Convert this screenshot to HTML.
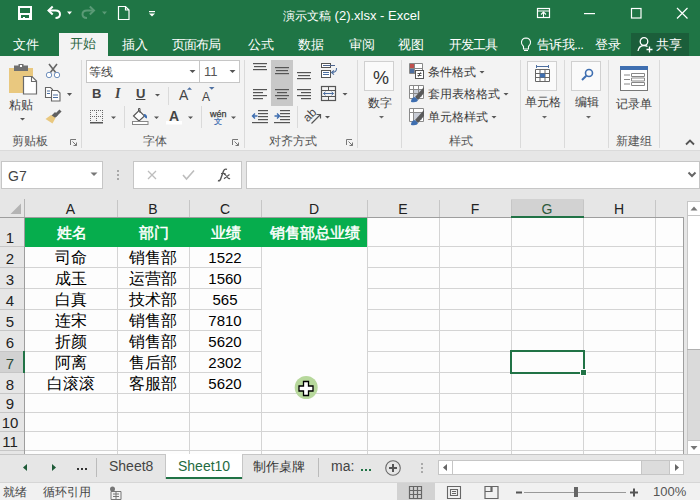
<!DOCTYPE html>
<html><head><meta charset="utf-8">
<style>
*{margin:0;padding:0;box-sizing:border-box}
html,body{width:700px;height:500px;overflow:hidden;background:#fff;font-family:"Liberation Sans",sans-serif}
.a{position:absolute}
#title{left:0;top:0;width:700px;height:56px;background:#1f7545}
.tt{color:#fff;font-size:12px;white-space:nowrap;line-height:16px}
.tab{color:#fff;font-size:13px;line-height:16px;white-space:nowrap}
#ribbon{left:0;top:56px;width:700px;height:95px;background:#f3f3f3;border-bottom:1px solid #dadada}
.sep{width:1px;background:#dadada}
.gl{font-size:12px;color:#555;line-height:14px;white-space:nowrap}
.rt{font-size:12px;color:#3c3c3c;line-height:14px;white-space:nowrap}
.dd{width:0;height:0;border-left:3px solid transparent;border-right:3px solid transparent;border-top:3px solid #555}
.hl{background:#d8d8d8}
.vl{background:#d4d4d4;width:1px}
.hlin{background:#d4d4d4;height:1px}
.ch{font-size:14px;color:#222;line-height:16px;text-align:center}
.rh{font-size:15px;color:#222;line-height:16px;text-align:center;width:24px}
.cell{font-size:16px;color:#000;line-height:16px;text-align:center;white-space:nowrap}
.hdr{font-size:15px;font-weight:normal;-webkit-text-stroke:0.5px #fff;color:#fff;line-height:16px;text-align:center;white-space:nowrap}
</style></head><body>
<div id="title" class="a"></div>
<div class="a tt" style="left:283px;top:8px">演示文稿<span style="font-size:13px"> (2).xlsx - Excel</span></div>
<!-- tabs -->
<div class="a" style="left:59px;top:33px;width:49px;height:24px;background:#f3f3f3"></div>
<div class="a tab" style="left:13px;top:37px">文件</div>
<div class="a tab" style="left:70px;top:36px;color:#2a6441">开始</div>
<div class="a tab" style="left:122px;top:37px">插入</div>
<div class="a tab" style="left:172px;top:37px;letter-spacing:-1px">页面布局</div>
<div class="a tab" style="left:248px;top:37px">公式</div>
<div class="a tab" style="left:298px;top:37px">数据</div>
<div class="a tab" style="left:349px;top:37px">审阅</div>
<div class="a tab" style="left:398px;top:37px">视图</div>
<div class="a tab" style="left:449px;top:37px;letter-spacing:-1px">开发工具</div>
<div class="a tab" style="left:537px;top:37px;letter-spacing:-0.6px">告诉我...</div>
<div class="a tab" style="left:595px;top:37px">登录</div>
<div class="a" style="left:631px;top:33px;width:58px;height:24px;background:#1b5e3a"></div>
<div class="a tab" style="left:656px;top:37px">共享</div>


<!-- QAT -->
<svg class="a" style="left:0;top:0" width="700" height="30">
 <rect x="18" y="6" width="14" height="14" fill="#fff"/>
 <rect x="20" y="8" width="10" height="5" fill="#1f7545"/>
 <rect x="21" y="15" width="8" height="3" fill="#1f7545"/>
 <rect x="23" y="17" width="2" height="1" fill="#fff"/>
 <!-- undo -->
 <path d="M48.5 10.5 H55.5 Q60 10.5 60 14.2 Q60 17.8 55.5 18" fill="none" stroke="#fff" stroke-width="2"/>
 <path d="M52.7 6.5 L48.5 10.5 L52.7 14.5" fill="none" stroke="#fff" stroke-width="2"/>
 <path d="M67 11.5h5l-2.5 3z" fill="#fff"/>
 <!-- redo faded -->
 <g transform="translate(142.5,0) scale(-1,1)">
 <path d="M48.5 10.5 H55.5 Q60 10.5 60 14.2 Q60 17.8 55.5 18" fill="none" stroke="#5a9a76" stroke-width="2"/>
 <path d="M52.7 6.5 L48.5 10.5 L52.7 14.5" fill="none" stroke="#5a9a76" stroke-width="2"/>
 </g>
 <path d="M102 11.5h5l-2.5 3z" fill="#5a9a76"/>
 <!-- new doc -->
 <path d="M118.5 6.5h7l3.5 3.5v9.5h-10.5z M125.5 6.5v3.5h3.5" fill="none" stroke="#fff" stroke-width="1.2"/>
 <!-- customize -->
 <rect x="149" y="11" width="6" height="1.2" fill="#fff"/>
 <path d="M149 13.5h6l-3 3z" fill="#fff"/>
 <!-- ribbon display options -->
 <rect x="537.5" y="8.5" width="12" height="9" fill="none" stroke="#fff" stroke-width="1.2"/>
 <rect x="537.5" y="10.5" width="12" height="1" fill="#fff"/>
 <path d="M543.5 17.5v-5 M541 14.5l2.5-2.5 2.5 2.5" fill="none" stroke="#fff" stroke-width="1.1"/>
 <!-- minimize -->
 <rect x="584" y="13" width="11" height="1.2" fill="#fff"/>
 <!-- maximize -->
 <rect x="631.5" y="8.5" width="9.5" height="9.5" fill="none" stroke="#fff" stroke-width="1.2"/>
 <!-- close -->
 <path d="M677 8 L687.5 18.5 M687.5 8 L677 18.5" stroke="#fff" stroke-width="1.2"/>
</svg>
<!-- bulb -->
<svg class="a" style="left:520px;top:37px" width="12" height="16"><path d="M3.5 9.5 Q1 7 1.5 5 Q2 1.2 6 1 Q10 1.2 10.5 5 Q11 7 8.5 9.5 V12 H3.5Z M4 13.5h4" fill="none" stroke="#fff" stroke-width="1.1"/></svg>
<!-- share person -->
<svg class="a" style="left:637px;top:36px" width="18" height="18"><circle cx="7" cy="5.5" r="3.8" fill="none" stroke="#fff" stroke-width="1.3"/><path d="M1 15 Q2 9.5 7 9.5 Q9 9.5 10.5 10.5" fill="none" stroke="#fff" stroke-width="1.3"/><path d="M12.5 10.5v6 M9.5 13.5h6" stroke="#fff" stroke-width="1.3"/></svg>
<div id="ribbon" class="a"></div>


<!-- ribbon separators -->
<div class="a sep" style="left:81px;top:60px;height:88px"></div>
<div class="a sep" style="left:244px;top:60px;height:88px"></div>
<div class="a sep" style="left:357px;top:60px;height:88px"></div>
<div class="a sep" style="left:401px;top:60px;height:88px"></div>
<div class="a sep" style="left:520px;top:60px;height:88px"></div>
<div class="a sep" style="left:564px;top:60px;height:88px"></div>
<div class="a sep" style="left:608px;top:60px;height:88px"></div>
<div class="a sep" style="left:659px;top:60px;height:88px"></div>
<div class="a sep" style="left:168px;top:87px;height:18px"></div>
<div class="a sep" style="left:124px;top:106px;height:22px"></div>
<div class="a sep" style="left:201px;top:106px;height:22px"></div>
<div class="a sep" style="left:297px;top:106px;height:22px"></div>
<!-- highlight -->
<div class="a" style="left:271px;top:60px;width:22px;height:46px;background:#c8c8c8"></div>
<!-- font boxes -->
<div class="a" style="left:86px;top:60px;width:114px;height:23px;background:#fff;border:1px solid #c6c6c6"></div>
<div class="a" style="left:199px;top:60px;width:41px;height:23px;background:#fff;border:1px solid #c6c6c6"></div>
<div class="a rt" style="left:89px;top:62px;line-height:20px">等线</div>
<div class="a rt" style="left:204px;top:62px;line-height:20px;font-size:13px;color:#555">11</div>
<!-- number / cells / editing button boxes -->
<div class="a" style="left:364px;top:61px;width:30px;height:30px;background:#fafafa;border:1px solid #d0d0d0"></div>
<div class="a" style="left:527px;top:61px;width:30px;height:30px;background:#fafafa;border:1px solid #d0d0d0"></div>
<div class="a" style="left:571px;top:61px;width:30px;height:30px;background:#fafafa;border:1px solid #d0d0d0"></div>
<div class="a" style="left:373px;top:68px;font-size:18px;line-height:20px;color:#333">%</div>
<!-- texts -->
<div class="a rt" style="left:9px;top:95px;line-height:20px">粘贴</div>
<div class="a rt" style="left:368px;top:93px;line-height:20px">数字</div>
<div class="a rt" style="left:525px;top:92px;line-height:20px">单元格</div>
<div class="a rt" style="left:575px;top:92px;line-height:20px">编辑</div>
<div class="a rt" style="left:616px;top:94px;line-height:20px">记录单</div>
<div class="a rt" style="left:428px;top:62px;line-height:20px">条件格式</div>
<div class="a rt" style="left:428px;top:84px;line-height:20px">套用表格格式</div>
<div class="a rt" style="left:428px;top:107px;line-height:20px">单元格样式</div>
<div class="a gl" style="left:12px;top:131px;line-height:20px">剪贴板</div>
<div class="a gl" style="left:143px;top:131px;line-height:20px">字体</div>
<div class="a gl" style="left:269px;top:131px;line-height:20px">对齐方式</div>
<div class="a gl" style="left:449px;top:131px;line-height:20px">样式</div>
<div class="a gl" style="left:616px;top:131px;line-height:20px">新建组</div>
<svg class="a" style="left:0;top:0" width="700" height="160">
 <!-- paste -->
 <rect x="9" y="68" width="24" height="25" fill="#e9c87f"/>
 <path d="M14 65.5h14v5.5h-14z" fill="#707070"/>
 <rect x="18.5" y="64" width="5" height="4" fill="#707070"/>
 <rect x="20" y="65" width="2" height="2" fill="#fff"/>
 <path d="M23.5 76.5h8.5l4.5 4.5v13h-13z" fill="#fff" stroke="#6a6a6a" stroke-width="1.2"/>
 <path d="M31.5 76.5v5h5" fill="none" stroke="#6a6a6a" stroke-width="1.1"/>
 <path d="M20 118h5l-2.5 2.5z" fill="#555"/>
 <!-- scissors -->
 <path d="M49 64 L56 73 M57 64 L50 73" stroke="#666" stroke-width="1.6"/>
 <circle cx="49" cy="75" r="2.7" fill="#fff" stroke="#7090bd" stroke-width="1"/>
 <circle cx="57" cy="75" r="2.7" fill="#fff" stroke="#7090bd" stroke-width="1"/>
 <!-- copy -->
 <path d="M45.5 87.5h5l2 2v8h-7z" fill="#fff" stroke="#666" stroke-width="1.1"/>
 <path d="M47 91h3 M47 93.5h3" stroke="#4d6fa0" stroke-width="1"/>
 <path d="M51.5 90.5h6l2.5 2.5v8h-8.5z" fill="#fff" stroke="#666" stroke-width="1.1"/>
 <path d="M53 95h5 M53 97.5h5" stroke="#4d6fa0" stroke-width="1"/>
 <path d="M67 93h5l-2.5 3z" fill="#555"/>
 <!-- format painter -->
 <path d="M60.5 110.5 L55 116" stroke="#606060" stroke-width="3"/>
 <path d="M56.5 113.5 L51 119" stroke="#606060" stroke-width="4"/>
 <path d="M51 115 L45.5 119 L52.5 123.5 L55.5 118z" fill="#e9c87f"/>
 <!-- launchers -->
 <g fill="none" stroke="#777" stroke-width="1">
  <path d="M70.5 145v-5.5h5.5 M72.5 141.5l4 4 M76.5 142.5v3h-3"/>
  <path d="M232.5 145v-5.5h5.5 M234.5 141.5l4 4 M238.5 142.5v3h-3"/>
  <path d="M346.5 145v-5.5h5.5 M348.5 141.5l4 4 M352.5 142.5v3h-3"/>
 </g>
 <!-- font dropdowns -->
 <path d="M189.5 70h6l-3 3z" fill="#555"/>
 <path d="M229.5 70h6l-3 3z" fill="#555"/>
 <!-- U dd -->
 <path d="M155 94h5l-2.5 2.5z" fill="#555"/>
 <path d="M111 116.5h5l-2.5 2.5z" fill="#555"/>
 <path d="M154 116.5h5l-2.5 2.5z" fill="#555"/>
 <path d="M188 116.5h5l-2.5 2.5z" fill="#555"/>
 <path d="M231 116.5h5l-2.5 2.5z" fill="#555"/>
 <!-- borders icon -->
 <g fill="#666"><rect x="100" y="110" width="1" height="1"/><rect x="100" y="116" width="1" height="1"/><rect x="102" y="110" width="1" height="1"/><rect x="102" y="112" width="1" height="1"/><rect x="102" y="114" width="1" height="1"/><rect x="102" y="116" width="1" height="1"/><rect x="102" y="118" width="1" height="1"/><rect x="102" y="120" width="1" height="1"/><rect x="102" y="122" width="1" height="1"/><rect x="90" y="110" width="1" height="1"/><rect x="90" y="112" width="1" height="1"/><rect x="90" y="114" width="1" height="1"/><rect x="90" y="116" width="1" height="1"/><rect x="90" y="118" width="1" height="1"/><rect x="90" y="120" width="1" height="1"/><rect x="90" y="122" width="1" height="1"/><rect x="92" y="110" width="1" height="1"/><rect x="92" y="116" width="1" height="1"/><rect x="94" y="110" width="1" height="1"/><rect x="94" y="116" width="1" height="1"/><rect x="96" y="110" width="1" height="1"/><rect x="96" y="112" width="1" height="1"/><rect x="96" y="114" width="1" height="1"/><rect x="96" y="116" width="1" height="1"/><rect x="96" y="118" width="1" height="1"/><rect x="96" y="120" width="1" height="1"/><rect x="96" y="122" width="1" height="1"/><rect x="98" y="110" width="1" height="1"/><rect x="98" y="116" width="1" height="1"/></g>
 <rect x="90" y="122" width="13" height="1.5" fill="#555"/>
 <!-- fill color -->
 <path d="M133.5 116 L139 110.5 L144.5 116 L139 121z" fill="#fff" stroke="#555" stroke-width="1.1"/>
 <path d="M138.5 111 V108.5 h1.5 V113" fill="none" stroke="#555" stroke-width="1"/>
 <path d="M144 114 Q147.5 114 147 118.5 Q145 118 144 116z" fill="#3e6eb0"/>
 <rect x="132.5" y="121.5" width="15.5" height="3" fill="#fff" stroke="#888" stroke-width="1"/>
 <!-- font color bar -->
 <rect x="166" y="121" width="16" height="3.5" fill="#fff"/>
 <!-- grow/shrink triangles -->
 <path d="M187 89.7h5l-2.5-2.5z" fill="#4d6fa0"/>
 <path d="M209 87h5.5l-2.75 2.7z" fill="#4d6fa0"/>
 <!-- alignment lines -->
 <g fill="#555">
  <rect x="253" y="63" width="14" height="1.2"/><rect x="254" y="66" width="12" height="1.2"/><rect x="253" y="69" width="14" height="1.2"/>
  <rect x="275" y="67" width="14" height="1.2"/><rect x="276" y="70" width="12" height="1.2"/><rect x="275" y="73" width="14" height="1.2"/>
  <rect x="297" y="72" width="14" height="1.2"/><rect x="298" y="75" width="12" height="1.2"/><rect x="297" y="78" width="14" height="1.2"/>
  <rect x="253" y="89" width="14" height="1.2"/><rect x="253" y="92" width="10" height="1.2"/><rect x="253" y="95" width="14" height="1.2"/><rect x="253" y="98" width="10" height="1.2"/>
  <rect x="275" y="89" width="14" height="1.2"/><rect x="277" y="92" width="10" height="1.2"/><rect x="275" y="95" width="14" height="1.2"/><rect x="277" y="98" width="10" height="1.2"/>
  <rect x="297" y="89" width="14" height="1.2"/><rect x="301" y="92" width="10" height="1.2"/><rect x="297" y="95" width="14" height="1.2"/><rect x="301" y="98" width="10" height="1.2"/>
 </g>
 <!-- wrap text -->
 <rect x="321.5" y="63.5" width="9" height="4" fill="#fff" stroke="#555" stroke-width="1"/>
 <rect x="323" y="65" width="12" height="1" fill="#4d6590"/>
 <rect x="321.5" y="70.5" width="9" height="7" fill="#fff" stroke="#555" stroke-width="1"/>
 <rect x="323" y="72" width="6" height="1" fill="#4d6fa0"/><rect x="323" y="74" width="6" height="1" fill="#4d6fa0"/>
 <path d="M336.5 68 Q337 72.5 331.5 72.5 M334 70.3 L331.5 72.5 L334 74.7" fill="none" stroke="#4d6fa0" stroke-width="1.1"/>
 <!-- merge -->
 <rect x="321.5" y="86.5" width="14" height="14" fill="none" stroke="#555" stroke-width="1.2"/>
 <path d="M321.5 90.5h14 M321.5 96.5h14 M328.5 86.5v4 M328.5 96.5v4" stroke="#555" stroke-width="1"/>
 <path d="M323.5 93.5h10 M325.5 91.8l-2 1.7 2 1.7 M331.5 91.8l2 1.7-2 1.7" fill="none" stroke="#4d6fa0" stroke-width="1"/>
 <path d="M342.5 93h5l-2.5 2.5z" fill="#555"/>
 <!-- indents -->
 <g fill="#555">
  <rect x="258" y="110" width="10" height="1.2"/><rect x="258" y="113" width="10" height="1.2"/><rect x="258" y="116" width="10" height="1.2"/><rect x="258" y="119" width="10" height="1.2"/><rect x="252" y="122" width="16" height="1.2"/>
  <rect x="280" y="110" width="10" height="1.2"/><rect x="280" y="113" width="10" height="1.2"/><rect x="280" y="116" width="10" height="1.2"/><rect x="280" y="119" width="10" height="1.2"/><rect x="274" y="122" width="16" height="1.2"/>
 </g>
 <path d="M252.5 116h5 M255 113.5l-2.5 2.5 2.5 2.5" fill="none" stroke="#3e6eb0" stroke-width="1.4"/>
 <path d="M274.5 116h5 M277 113.5l2.5 2.5-2.5 2.5" fill="none" stroke="#3e6eb0" stroke-width="1.4"/>
 <!-- orientation -->
 <path d="M311.5 123.5 L320.5 114.5 M316.5 114.5h4v4" fill="none" stroke="#555" stroke-width="1.2"/>
 <path d="M325 116h5l-2.5 2.5z" fill="#555"/>
 <!-- number dd -->
 <path d="M379 116h5l-2.5 2.5z" fill="#666"/>
 <path d="M542 116h5l-2.5 2.5z" fill="#666"/>
 <path d="M586 116h5l-2.5 2.5z" fill="#666"/>
 <!-- styles dd -->
 <path d="M479.5 71h5l-2.5 2.5z" fill="#555"/>
 <path d="M503.5 93h5l-2.5 2.5z" fill="#555"/>
 <path d="M491.5 116h5l-2.5 2.5z" fill="#555"/>
 <!-- cond format icon -->
 <path d="M409.5 63.5h13v10h-13z M409.5 68.5h13 M414.5 63.5v10" fill="#fff" stroke="#888" stroke-width="1"/>
 <rect x="410" y="64" width="4" height="4" fill="#c0504d"/>
 <rect x="410" y="69" width="4" height="4" fill="#4d6fa0"/>
 <rect x="415.5" y="70.5" width="8" height="8" fill="#fff" stroke="#555" stroke-width="1"/>
 <path d="M417.5 73.5h4 M417.5 75.5h4 M420.7 72.3 L418.3 76.7" stroke="#444" stroke-width="0.9"/>
 <!-- table format icon -->
 <rect x="410" y="86" width="13" height="12" fill="#fff"/>
 <rect x="414" y="90" width="8" height="7" fill="#c9cdd6"/>
 <path d="M409.5 85.5h14v13h-14z M409.5 89.5h14 M409.5 93.5h14 M413.5 85.5v13 M418.5 85.5v13" fill="none" stroke="#8a8a8a" stroke-width="1"/>
 <path d="M424 87 L424 93 L418 100 L415 97z" fill="#5a5a5a"/>
 <path d="M411 102 Q411 97.5 415 97 L418 100 Q417 103 411 102z" fill="#3e6eb0"/>
 <!-- cell style icon -->
 <rect x="410" y="109" width="13" height="12" fill="#fff"/>
 <rect x="414" y="113" width="8" height="7" fill="#c9cdd6"/>
 <path d="M409.5 108.5h14v13h-14z M409.5 112.5h14 M413.5 108.5v13" fill="none" stroke="#8a8a8a" stroke-width="1"/>
 <path d="M424 110 L424 116 L418 123 L415 120z" fill="#5a5a5a"/>
 <path d="M411 125 Q411 120.5 415 120 L418 123 Q417 126 411 125z" fill="#3e6eb0"/>
 <!-- cells icon -->
 <path d="M535.5 69.5h14v12h-14z M535.5 73.5h14 M535.5 77.5h14 M540 69.5v12 M545 69.5v12" fill="#fff" stroke="#666" stroke-width="1"/>
 <rect x="540" y="73.5" width="5" height="4" fill="#3e6eb0"/>
 <path d="M536 66.5h13 M536.5 65v3 M548.5 65v3" stroke="#4d6fa0" stroke-width="1"/>
 <!-- search icon -->
 <circle cx="589" cy="73" r="3.5" fill="none" stroke="#3e6eb0" stroke-width="1.6"/>
 <path d="M586.3 75.8 L582 80" stroke="#3e6eb0" stroke-width="2"/>
 <!-- form icon -->
 <rect x="620.5" y="66.5" width="27" height="24" fill="#fff" stroke="#777" stroke-width="1"/>
 <rect x="620" y="66" width="28" height="4" fill="#3e6eb0"/>
 <path d="M624 75h6 M624 79.5h6 M624 84h6" stroke="#888" stroke-width="1"/>
 <path d="M631.5 73.5h13v3h-13z M631.5 78h13v3h-13z M631.5 82.5h13v3h-13z" fill="none" stroke="#888" stroke-width="1"/>
 <!-- collapse -->
 <path d="M686 144.5 L690 140.5 L694 144.5" fill="none" stroke="#555" stroke-width="1.8"/>
</svg>
<div class="a" style="left:92px;top:84px;font-size:13px;font-weight:bold;line-height:20px;color:#444">B</div>
<div class="a" style="left:115px;top:84px;font-size:14px;font-style:italic;font-weight:bold;font-family:'Liberation Serif';line-height:20px;color:#444">I</div>
<div class="a" style="left:136px;top:84px;font-size:13px;font-weight:bold;line-height:20px;color:#444;text-decoration:underline">U</div>
<div class="a" style="left:179px;top:85px;font-size:14px;line-height:20px;color:#444">A</div>
<div class="a" style="left:202px;top:87px;font-size:12px;line-height:20px;color:#444">A</div>
<div class="a" style="left:169px;top:106px;font-size:14px;font-weight:bold;line-height:20px;color:#444">A</div>
<div class="a" style="left:210px;top:108px;font-size:9px;line-height:12px;color:#3a3a3a;-webkit-text-stroke:0.25px #3a3a3a">wén</div>
<div class="a" style="left:214px;top:115.5px;font-size:7.5px;line-height:12px;color:#3e6eb0;-webkit-text-stroke:0.2px #3e6eb0">文</div>
<div class="a" style="left:303px;top:108px;font-size:12px;line-height:14px;color:#444;transform:rotate(-45deg);transform-origin:50% 50%">ab</div>

<!-- formula bar area -->
<div class="a" style="left:0;top:151px;width:700px;height:49px;background:#e6e6e6"></div>
<div class="a" style="left:1px;top:161px;width:102px;height:28px;background:#fff;border:1px solid #c6c6c6"></div>
<div class="a" style="left:8px;top:167px;font-size:14px;color:#444;line-height:18px">G7</div>
<div class="a" style="left:133px;top:161px;width:109px;height:28px;background:#fff;border:1px solid #c6c6c6"></div>
<div class="a" style="left:246px;top:161px;width:454px;height:28px;background:#fff;border:1px solid #c6c6c6"></div>

<!-- grid -->
<div class="a" style="left:0;top:200px;width:687px;height:17px;background:#e6e6e6"></div>
<div class="a" style="left:0;top:217px;width:24px;height:237px;background:#e6e6e6"></div>
<div class="a" style="left:25px;top:218px;width:658px;height:236px;background:#fdfdfd"></div>
<svg class="a" style="left:0;top:200px" width="24" height="17"><path d="M21 3.5 L21 14 L10.5 14z" fill="#b4b4b4"/></svg><div class="a" style="left:24px;top:199px;width:1px;height:18px;background:#b4b4b4"></div>
<div class="a" style="left:0;top:217px;width:683px;height:1px;background:#9e9e9e"></div>
<div class="a" style="left:24px;top:217px;width:1px;height:237px;background:#9e9e9e"></div>
<div class="a" style="left:511px;top:199px;width:73px;height:18px;background:#d2d2d2"></div>
<div class="a" style="left:0;top:351px;width:24px;height:22px;background:#d2d2d2"></div>
<div class="a" style="left:117px;top:200px;width:1px;height:17px;background:#c6c6c6"></div>
<div class="a" style="left:189px;top:200px;width:1px;height:17px;background:#c6c6c6"></div>
<div class="a" style="left:261px;top:200px;width:1px;height:17px;background:#c6c6c6"></div>
<div class="a" style="left:367px;top:200px;width:1px;height:17px;background:#c6c6c6"></div>
<div class="a" style="left:439px;top:200px;width:1px;height:17px;background:#c6c6c6"></div>
<div class="a" style="left:511px;top:200px;width:1px;height:17px;background:#c6c6c6"></div>
<div class="a" style="left:583px;top:200px;width:1px;height:17px;background:#c6c6c6"></div>
<div class="a" style="left:655px;top:200px;width:1px;height:17px;background:#c6c6c6"></div>
<div class="a" style="left:0;top:246px;width:24px;height:1px;background:#c6c6c6"></div>
<div class="a" style="left:0;top:267px;width:24px;height:1px;background:#c6c6c6"></div>
<div class="a" style="left:0;top:288px;width:24px;height:1px;background:#c6c6c6"></div>
<div class="a" style="left:0;top:309px;width:24px;height:1px;background:#c6c6c6"></div>
<div class="a" style="left:0;top:330px;width:24px;height:1px;background:#c6c6c6"></div>
<div class="a" style="left:0;top:351px;width:24px;height:1px;background:#c6c6c6"></div>
<div class="a" style="left:0;top:372px;width:24px;height:1px;background:#c6c6c6"></div>
<div class="a" style="left:0;top:393px;width:24px;height:1px;background:#c6c6c6"></div>
<div class="a" style="left:0;top:412px;width:24px;height:1px;background:#c6c6c6"></div>
<div class="a" style="left:0;top:431px;width:24px;height:1px;background:#c6c6c6"></div>
<div class="a" style="left:0;top:450px;width:24px;height:1px;background:#c6c6c6"></div>
<div class="a vl" style="left:117px;top:218px;height:236px"></div>
<div class="a vl" style="left:189px;top:218px;height:236px"></div>
<div class="a vl" style="left:261px;top:218px;height:236px"></div>
<div class="a vl" style="left:367px;top:218px;height:236px"></div>
<div class="a vl" style="left:439px;top:218px;height:236px"></div>
<div class="a vl" style="left:511px;top:218px;height:236px"></div>
<div class="a vl" style="left:583px;top:218px;height:236px"></div>
<div class="a vl" style="left:655px;top:218px;height:236px"></div>
<div class="a hlin" style="left:25px;top:246px;width:658px"></div>
<div class="a hlin" style="left:25px;top:267px;width:236px"></div>
<div class="a hlin" style="left:368px;top:267px;width:315px"></div>
<div class="a hlin" style="left:25px;top:288px;width:236px"></div>
<div class="a hlin" style="left:368px;top:288px;width:315px"></div>
<div class="a hlin" style="left:25px;top:309px;width:236px"></div>
<div class="a hlin" style="left:368px;top:309px;width:315px"></div>
<div class="a hlin" style="left:25px;top:330px;width:236px"></div>
<div class="a hlin" style="left:368px;top:330px;width:315px"></div>
<div class="a hlin" style="left:25px;top:351px;width:236px"></div>
<div class="a hlin" style="left:368px;top:351px;width:315px"></div>
<div class="a hlin" style="left:25px;top:372px;width:236px"></div>
<div class="a hlin" style="left:368px;top:372px;width:315px"></div>
<div class="a hlin" style="left:25px;top:393px;width:658px"></div>
<div class="a hlin" style="left:25px;top:412px;width:658px"></div>
<div class="a hlin" style="left:25px;top:431px;width:658px"></div>
<div class="a hlin" style="left:25px;top:450px;width:658px"></div>
<div class="a" style="left:25px;top:218px;width:342px;height:29px;background:#06ad4d"></div>
<div class="a" style="left:511px;top:216px;width:73px;height:2px;background:#217346"></div>
<div class="a" style="left:23px;top:351px;width:2px;height:22px;background:#217346"></div>
<div class="a" style="left:683px;top:217px;width:1px;height:237px;background:#9e9e9e"></div>
<div class="a ch" style="left:24px;top:201px;width:93px;color:#222">A</div>
<div class="a ch" style="left:117px;top:201px;width:72px;color:#222">B</div>
<div class="a ch" style="left:189px;top:201px;width:72px;color:#222">C</div>
<div class="a ch" style="left:261px;top:201px;width:106px;color:#222">D</div>
<div class="a ch" style="left:367px;top:201px;width:72px;color:#222">E</div>
<div class="a ch" style="left:439px;top:201px;width:72px;color:#222">F</div>
<div class="a ch" style="left:511px;top:201px;width:72px;color:#2d5a3d">G</div>
<div class="a ch" style="left:583px;top:201px;width:72px;color:#222">H</div>
<div class="a rh" style="left:-2px;top:230px;color:#222">1</div>
<div class="a rh" style="left:-2px;top:251px;color:#222">2</div>
<div class="a rh" style="left:-2px;top:272px;color:#222">3</div>
<div class="a rh" style="left:-2px;top:293px;color:#222">4</div>
<div class="a rh" style="left:-2px;top:314px;color:#222">5</div>
<div class="a rh" style="left:-2px;top:335px;color:#222">6</div>
<div class="a rh" style="left:-2px;top:356px;color:#2d4a38">7</div>
<div class="a rh" style="left:-2px;top:377px;color:#222">8</div>
<div class="a rh" style="left:-2px;top:396px;color:#222">9</div>
<div class="a rh" style="left:-2px;top:415px;color:#222">10</div>
<div class="a rh" style="left:-2px;top:434px;color:#222">11</div>
<div class="a hdr" style="left:25px;top:225px;width:93px">姓名</div>
<div class="a hdr" style="left:118px;top:225px;width:72px">部门</div>
<div class="a hdr" style="left:190px;top:225px;width:72px">业绩</div>
<div class="a hdr" style="left:262px;top:225px;width:106px">销售部总业绩</div>
<div class="a cell" style="left:24px;top:250px;width:93px">司命</div>
<div class="a cell" style="left:117px;top:250px;width:72px">销售部</div>
<div class="a cell" style="left:189px;top:250px;width:72px;font-size:15px">1522</div>
<div class="a cell" style="left:24px;top:271px;width:93px">成玉</div>
<div class="a cell" style="left:117px;top:271px;width:72px">运营部</div>
<div class="a cell" style="left:189px;top:271px;width:72px;font-size:15px">1560</div>
<div class="a cell" style="left:24px;top:292px;width:93px">白真</div>
<div class="a cell" style="left:117px;top:292px;width:72px">技术部</div>
<div class="a cell" style="left:189px;top:292px;width:72px;font-size:15px">565</div>
<div class="a cell" style="left:24px;top:313px;width:93px">连宋</div>
<div class="a cell" style="left:117px;top:313px;width:72px">销售部</div>
<div class="a cell" style="left:189px;top:313px;width:72px;font-size:15px">7810</div>
<div class="a cell" style="left:24px;top:334px;width:93px">折颜</div>
<div class="a cell" style="left:117px;top:334px;width:72px">销售部</div>
<div class="a cell" style="left:189px;top:334px;width:72px;font-size:15px">5620</div>
<div class="a cell" style="left:24px;top:355px;width:93px">阿离</div>
<div class="a cell" style="left:117px;top:355px;width:72px">售后部</div>
<div class="a cell" style="left:189px;top:355px;width:72px;font-size:15px">2302</div>
<div class="a cell" style="left:24px;top:376px;width:93px">白滚滚</div>
<div class="a cell" style="left:117px;top:376px;width:72px">客服部</div>
<div class="a cell" style="left:189px;top:376px;width:72px;font-size:15px">5620</div>
<div class="a" style="left:510px;top:350px;width:75px;height:24px;border:2px solid #217346"></div>
<div class="a" style="left:580px;top:369px;width:7px;height:7px;background:#fff"></div>
<div class="a" style="left:581px;top:370px;width:5px;height:5px;background:#217346"></div>
<svg class="a" style="left:293px;top:374px" width="27" height="27"><circle cx="13.2" cy="13.5" r="11.5" fill="#b7d89c"/><path d="M10.5 7.5h5v4.5h4.5v5h-4.5v4.5h-5v-4.5h-4.5v-5h4.5z" fill="#fff" stroke="#000" stroke-width="1.3"/></svg>
<div class="a" style="left:684px;top:200px;width:16px;height:254px;background:#e6e6e6"></div>
<div class="a" style="left:687px;top:201px;width:13px;height:254px;background:#dadada;border:1px solid #c6c6c6;border-right:none"></div>
<div class="a" style="left:688px;top:202px;width:12px;height:13px;background:#fff"></div>
<div class="a" style="left:687px;top:215px;width:13px;height:1px;background:#c6c6c6"></div>
<div class="a" style="left:688px;top:216px;width:12px;height:133px;background:#fff"></div>
<div class="a" style="left:687px;top:349px;width:13px;height:1px;background:#b0b0b0"></div>
<div class="a" style="left:687px;top:440px;width:13px;height:15px;background:#fff;border:1px solid #c6c6c6;border-right:none"></div>
<svg class="a" style="left:687px;top:201px" width="13" height="254"><path d="M3.5 9.5h7l-3.5-4z" fill="#777"/><path d="M3.5 245h7l-3.5 4z" fill="#777"/></svg>
<svg class="a" style="left:0;top:150px" width="700" height="50"><path d="M90.5 22.5h7l-3.5 3.5z" fill="#777"/><rect x="117" y="20" width="2" height="2" fill="#a8a8a8"/><rect x="117" y="24" width="2" height="2" fill="#a8a8a8"/><rect x="117" y="28" width="2" height="2" fill="#a8a8a8"/><path d="M148 21 L156 29 M156 21 L148 29" stroke="#bdbdbd" stroke-width="1.3"/><path d="M183 25 L186.5 29 L194 20.5" fill="none" stroke="#bdbdbd" stroke-width="1.6"/><path d="M688.5 22.5 L692 26 L695.5 22.5" fill="none" stroke="#666" stroke-width="2"/></svg>
<svg class="a" style="left:210px;top:164px" width="30" height="22"><path d="M8 16.5 Q10 17.5 11 14 L13.5 7 Q14.5 4.5 17 5.3" fill="none" stroke="#555" stroke-width="1.4"/><path d="M11 9.5h4.5" stroke="#555" stroke-width="1.1"/><path d="M14 10.5 Q15 10 16 11.5 L18 14 Q19 15 20 14.2 M19.5 10.5 L14 14.7" fill="none" stroke="#555" stroke-width="1.1"/></svg>
<div class="a" style="left:0;top:454px;width:700px;height:28px;background:#e6e6e6;border-top:1px solid #c6c6c6"></div>
<svg class="a" style="left:0;top:454px" width="700" height="28"><path d="M27 10 L23 13.5 L27 17z" fill="#1d5a37"/><path d="M52 10 L56 13.5 L52 17z" fill="#1d5a37"/><rect x="77" y="14" width="2" height="2" fill="#333"/><rect x="81" y="14" width="2" height="2" fill="#333"/><rect x="85" y="14" width="2" height="2" fill="#333"/><rect x="96" y="4" width="1" height="19" fill="#bbb"/><rect x="318" y="4" width="1" height="19" fill="#bbb"/><rect x="361" y="15" width="2" height="2" fill="#217346"/><rect x="365" y="15" width="2" height="2" fill="#217346"/><rect x="369" y="15" width="2" height="2" fill="#217346"/><circle cx="393" cy="14" r="7.3" fill="none" stroke="#6a6a6a" stroke-width="1.1"/><path d="M393 10v8 M389 14h8" stroke="#555" stroke-width="2"/><rect x="421" y="9" width="2" height="2" fill="#aaa"/><rect x="421" y="13" width="2" height="2" fill="#aaa"/><rect x="421" y="17" width="2" height="2" fill="#aaa"/></svg>
<div class="a" style="left:165px;top:454px;width:78px;height:25px;background:#fff;border-left:1px solid #c6c6c6;border-right:1px solid #c6c6c6"></div>
<div class="a" style="left:166px;top:477px;width:76px;height:2px;background:#217346"></div>
<div class="a" style="left:109px;top:457px;font-size:14px;line-height:18px;color:#444">Sheet8</div>
<div class="a" style="left:178px;top:457px;font-size:14px;line-height:18px;color:#1f6b41">Sheet10</div>
<div class="a" style="left:253px;top:457px;font-size:13px;line-height:20px;color:#333">制作桌牌</div>
<div class="a" style="left:331px;top:457px;font-size:14px;line-height:18px;color:#444">ma:</div>
<div class="a" style="left:438px;top:460px;width:246px;height:15px;background:#fff;border:1px solid #c6c6c6"></div>
<div class="a" style="left:452px;top:460px;width:190px;height:15px;border:1px solid #c6c6c6;border-top:none;border-bottom:none"></div>
<div class="a" style="left:642px;top:461px;width:27px;height:13px;background:#dcdcdc"></div>
<div class="a" style="left:669px;top:460px;width:1px;height:15px;background:#c6c6c6"></div>
<svg class="a" style="left:438px;top:460px" width="246" height="15"><path d="M9 4 L5 7.5 L9 11z" fill="#666"/><path d="M237 4 L241 7.5 L237 11z" fill="#666"/></svg>
<div class="a" style="left:0;top:482px;width:700px;height:18px;background:#f1f1f1;border-top:1px solid #d6d6d6"></div>
<div class="a" style="left:397px;top:483px;width:38px;height:17px;background:#d2d2d2"></div>
<div class="a" style="left:3px;top:482px;font-size:12px;line-height:20px;color:#444">就绪</div>
<div class="a" style="left:43px;top:482px;font-size:12px;line-height:20px;color:#444">循环引用</div>
<svg class="a" style="left:0;top:482px" width="700" height="18"><circle cx="112.5" cy="7" r="2.5" fill="#777"/><path d="M111 9.5h10v8h-10z" fill="none" stroke="#777" stroke-width="1"/><path d="M113 12h6 M113 14.5h6 M116 10v7" stroke="#777" stroke-width="1"/><path d="M409.5 4.5h12v12h-12z M413.5 4.5v12 M417.5 4.5v12 M409.5 8.5h12 M409.5 12.5h12" fill="none" stroke="#666" stroke-width="1.2"/><path d="M447.5 4.5h13v12h-13z M450.5 7.5h7v6h-7z M452 9.5h4 M452 11.5h4" fill="none" stroke="#666" stroke-width="1.1"/><path d="M485 4.5h13v12h-13z M485 9.5h6v-5 M492 4.5v5h-1" fill="none" stroke="#666" stroke-width="1.2"/><rect x="516" y="9.5" width="6" height="2" fill="#555"/><rect x="524" y="10" width="102" height="1" fill="#999"/><rect x="574" y="5" width="4" height="10" fill="#666"/><path d="M630 10.5h8 M634 6.5v8" stroke="#555" stroke-width="2"/></svg>
<div class="a" style="left:653px;top:482px;font-size:13px;line-height:20px;color:#555">100%</div>
</body></html>
